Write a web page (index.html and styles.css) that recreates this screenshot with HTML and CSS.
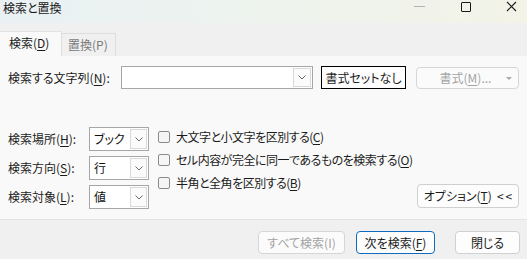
FILE: index.html
```html
<!DOCTYPE html>
<html lang="ja">
<head>
<meta charset="utf-8">
<title>検索と置換</title>
<link rel="stylesheet" href="styles.css">
</head>
<body>
<div class="window">
  <div class="titlebar">
    <span class="title">検索と置換</span>
    <div class="controls">
      <span class="ctl ctl-min"><svg width="11" height="11" viewBox="0 0 11 11"><line x1="0" y1="5.5" x2="11" y2="5.5" stroke="#b4b4b4" stroke-width="1"/></svg></span>
      <span class="ctl ctl-max"><svg width="11" height="11" viewBox="0 0 11 11"><rect x="1.5" y="1.5" width="9" height="9" rx="0.5" fill="none" stroke="#1a1a1a" stroke-width="1"/></svg></span>
      <span class="ctl ctl-close"><svg width="11" height="11" viewBox="0 0 11 11"><path d="M1 1 L10 10 M10 1 L1 10" stroke="#1a1a1a" stroke-width="1.1" fill="none"/></svg></span>
    </div>
  </div>
  <div class="tabstrip">
    <div class="tab active">検索(<u>D</u>)</div>
    <div class="tab">置換(P)</div>
  </div>
  <div class="panel">
    <div class="row1">
      <label class="lbl-find">検索する文字列(<u>N</u>):</label>
      <div class="combo">
        <span class="combo-text"></span>
        <span class="combo-btn"><svg width="8" height="5" viewBox="0 0 8 5"><polyline points="0.5,0.5 4,4 7.5,0.5" fill="none" stroke="#6b6b6b" stroke-width="1"/></svg></span>
      </div>
      <button class="btn btn-focus btn-noformat">書式セットなし</button>
      <button class="btn btn-disabled btn-format">書式(<u>M</u>)...<span class="caret"></span></button>
    </div>
    <div class="lower">
      <div class="opts">
        <label class="olbl">検索場所(<u>H</u>):</label>
        <div class="sel"><span class="sel-text">ブック</span><span class="sel-btn"><svg width="8" height="5" viewBox="0 0 8 5"><polyline points="0.5,0.5 4,4 7.5,0.5" fill="none" stroke="#6b6b6b" stroke-width="1"/></svg></span></div>
        <label class="olbl">検索方向(<u>S</u>):</label>
        <div class="sel"><span class="sel-text">行</span><span class="sel-btn"><svg width="8" height="5" viewBox="0 0 8 5"><polyline points="0.5,0.5 4,4 7.5,0.5" fill="none" stroke="#6b6b6b" stroke-width="1"/></svg></span></div>
        <label class="olbl">検索対象(<u>L</u>):</label>
        <div class="sel"><span class="sel-text">値</span><span class="sel-btn"><svg width="8" height="5" viewBox="0 0 8 5"><polyline points="0.5,0.5 4,4 7.5,0.5" fill="none" stroke="#6b6b6b" stroke-width="1"/></svg></span></div>
      </div>
      <div class="checks">
        <div class="chk"><span class="box"></span><span>大文字と小文字を区別する(<u>C</u>)</span></div>
        <div class="chk"><span class="box"></span><span>セル内容が完全に同一であるものを検索する(<u>O</u>)</span></div>
        <div class="chk"><span class="box"></span><span>半角と全角を区別する(<u>B</u>)</span></div>
      </div>
      <button class="btn btn-options">オプション(<u>T</u>) <span class="lt">&lt;&lt;</span></button>
    </div>
  </div>
  <div class="footer">
    <button class="btn btn-disabled btn-all">すべて検索(I)</button>
    <button class="btn btn-primary btn-next">次を検索(<u>F</u>)</button>
    <button class="btn btn-close">閉じる</button>
  </div>
</div>
</body>
</html>
```
FILE: styles.css
```css
* { box-sizing: border-box; }
html, body { margin: 0; padding: 0; }
body {
  width: 527px;
  height: 259px;
  overflow: hidden;
  font-family: "Noto Sans CJK JP", "Noto Sans", sans-serif;
  font-size: 12px;
  font-feature-settings: "palt";
  color: #1b1b1b;
  background: #f0f0f0;
}
u { text-decoration-thickness: 1px; text-underline-offset: 2px; }
.window { display: flex; flex-direction: column; width: 527px; height: 259px; }

.titlebar {
  height: 23px;
  display: flex;
  align-items: flex-start;
  background: linear-gradient(90deg, #e9f1f4 0%, #eef3ee 50%, #f3f3e7 100%);
}
.title { padding: 0 0 0 3px; line-height: 16px; font-size: 12px; color: #1a1a1a; }
.controls { margin-left: auto; display: flex; padding-top: 1px; }
.ctl { display: flex; }
.ctl svg { display: block; }
.ctl-min { margin-right: 35px; }
.ctl-max { margin-right: 35px; }
.ctl-close { margin-right: 10px; }

.tabstrip {
  height: 33px;
  display: flex;
  align-items: flex-end;
  background: #f0f0f0;
  position: relative;
  z-index: 1;
  margin-bottom: -1px;
}
.tab {
  height: 23px;
  width: 55px;
  border: 1px solid #dddddd;
  border-bottom: none;
  margin-left: -1px;
  background: #f0f0f0;
  color: #7a7a7a;
  line-height: 21px;
  padding-left: 6px;
}
.tab.active {
  margin-left: 0;
  width: 62px;
  height: 25px;
  background: #f9f9f9;
  border-color: #e3e3e3;
  border-left: none;
  color: #1b1b1b;
  padding-left: 9px;
  line-height: 22px;
}

.panel {
  height: 165px;
  background: #f9f9f9;
  border-top: 1px solid #e3e3e3;
  border-bottom: 1px solid #e3e3e3;
  padding: 10px 8px 0 8px;
  display: flex;
  flex-direction: column;
}
.row1 { display: flex; align-items: center; height: 23px; }
.lbl-find { width: 113px; line-height: 16px; }
.combo {
  width: 192px;
  height: 23px;
  border: 1px solid #a6a6a6;
  background: #fff;
  display: flex;
  justify-content: flex-end;
  padding: 1px;
}
.combo-btn {
  width: 18px;
  border: 1px solid #d9d9d9;
  background: #fbfbfb;
  display: flex;
  align-items: center;
  justify-content: center;
}
.combo-btn svg, .sel-btn svg { display: block; }

.btn {
  font: inherit;
  font-feature-settings: "palt";
  color: #1b1b1b;
  background: #fdfdfd;
  border: 1px solid #d0d0d0;
  border-radius: 4px;
  height: 23px;
  padding: 0;
  line-height: 16px;
  display: flex;
  align-items: center;
  justify-content: center;
  white-space: nowrap;
  flex: none;
}
.btn-disabled { color: #a3a3a3; background: #fbfbfb; border-color: #d6d6d6; }
.btn-focus { border: 1px solid #000; border-radius: 0; background: #fdfdfd; }
.btn-noformat { width: 85px; margin-left: 8px; }
.btn-format { width: 103px; margin-left: 10px; height: 22px; position: relative; padding-right: 4px; }
.caret {
  position: absolute;
  right: 6px;
  top: 9px;
  width: 0; height: 0;
  border-left: 3px solid transparent;
  border-right: 3px solid transparent;
  border-top: 3px solid #a8a8a8;
}

.lower { display: flex; margin-top: 38px; }
.opts {
  display: grid;
  grid-template-columns: 81px 60px;
  grid-auto-rows: 24px;
  row-gap: 5px;
  align-items: center;
  flex: none;
}
.olbl { line-height: 16px; white-space: nowrap; }
.sel {
  height: 24px;
  border: 1px solid #a6a6a6;
  background: #fff;
  display: flex;
  padding: 1px;
}
.sel-text { flex: 1; padding-left: 3px; line-height: 20px; color: #111; }
.sel-btn {
  width: 17px;
  border: 1px solid #d9d9d9;
  background: #fbfbfb;
  display: flex;
  align-items: center;
  justify-content: center;
}
.checks {
  margin-left: 9px;
  padding-top: 3px;
  display: flex;
  flex-direction: column;
  flex: none;
  width: 250px;
  white-space: nowrap;
  letter-spacing: -0.5px;
}
.chk { height: 23px; display: flex; align-items: flex-start; line-height: 14px; }
.box {
  width: 12px;
  height: 12px;
  border: 1px solid #8a8a8a;
  border-radius: 2px;
  background: #f5f5f5;
  margin-right: 6px;
  margin-top: 1px;
  flex: none;
}
.btn-options { width: 102px; height: 24px; margin-left: auto; align-self: flex-end; margin-bottom: 1px; }
.lt { margin-left: 5px; letter-spacing: 2px; margin-right: -2px; }

.footer {
  flex: 1;
  background: #f0f0f0;
  display: flex;
  justify-content: flex-end;
  align-items: flex-start;
  padding: 11px 7px 0 0;
}
.btn-all { width: 87px; }
.btn-primary { border-color: #0f6cbd; width: 79px; margin-left: 11px; }
.btn-close { width: 65px; margin-left: 20px; }
```
